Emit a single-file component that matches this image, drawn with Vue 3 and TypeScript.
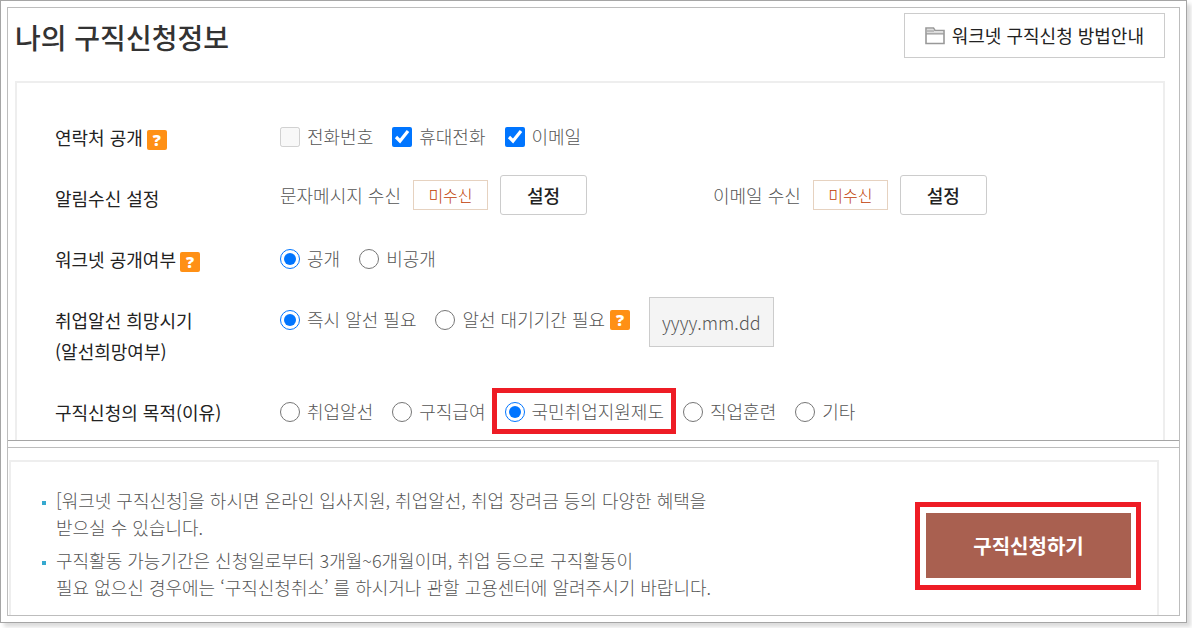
<script setup lang="ts">
import { ref } from 'vue'

const contacts = ref([
  { id: 'phone', label: '전화번호', checked: false, disabled: true },
  { id: 'mobile', label: '휴대전화', checked: true, disabled: false },
  { id: 'email', label: '이메일', checked: true, disabled: false },
])
const alerts = [
  { id: 'sms', label: '문자메시지 수신', state: '미수신' },
  { id: 'mail', label: '이메일 수신', state: '미수신' },
]
const visibility = ref('공개')
const visibilityOptions = ['공개', '비공개']
const timing = ref('즉시 알선 필요')
const timingOptions = ['즉시 알선 필요', '알선 대기기간 필요']
const purpose = ref('국민취업지원제도')
const purposeOptions = ['취업알선', '구직급여', '국민취업지원제도', '직업훈련', '기타']
const notes = [
  ['[워크넷 구직신청]을 하시면 온라인 입사지원, 취업알선, 취업 장려금 등의 다양한 혜택을', '받으실 수 있습니다.'],
  ['구직활동 가능기간은 신청일로부터 3개월~6개월이며, 취업 등으로 구직활동이', '필요 없으신 경우에는 ‘구직신청취소’ 를 하시거나 관할 고용센터에 알려주시기 바랍니다.'],
]
</script>

<template>
  <main class="sheet" lang="ko">
    <div class="frame">
      <section class="info">
        <header class="head">
          <h1>나의 구직신청정보</h1>
          <button type="button" class="guide">
            <svg width="20" height="18" viewBox="0 0 20 18" aria-hidden="true">
              <path d="M1 16.500V1h7.500l1.500 2.500H19v13z" fill="#fff" stroke="#999" stroke-width="1.6" />
              <path d="M2 2h6l1.500 2.500H18V7H2z" fill="#ddd" />
              <path d="M1 6.800h18M2 4h7" stroke="#999" stroke-width="1.2" />
            </svg>
            <span>워크넷 구직신청 방법안내</span>
          </button>
        </header>

        <form class="panel" @submit.prevent>
          <div class="row" role="group" aria-labelledby="t-contact">
            <div class="term"><span id="t-contact">연락처 공개</span><button type="button" class="help">?</button></div>
            <div class="controls">
              <label v-for="c in contacts" :key="c.id" class="option">
                <input v-model="c.checked" type="checkbox" :disabled="c.disabled" /><span>{{ c.label }}</span>
              </label>
            </div>
          </div>

          <div class="row" role="group" aria-labelledby="t-alert">
            <div class="term"><span id="t-alert">알림수신 설정</span></div>
            <div class="controls alerts">
              <div v-for="a in alerts" :key="a.id" class="alert">
                <span>{{ a.label }}</span><span class="state">{{ a.state }}</span>
                <button type="button" class="set">설정</button>
              </div>
            </div>
          </div>

          <div class="row" role="radiogroup" aria-labelledby="t-open">
            <div class="term"><span id="t-open">워크넷 공개여부</span><button type="button" class="help">?</button></div>
            <div class="controls">
              <label v-for="o in visibilityOptions" :key="o" class="option">
                <input v-model="visibility" type="radio" name="visibility" :value="o" /><span>{{ o }}</span>
              </label>
            </div>
          </div>

          <div class="row" role="radiogroup" aria-labelledby="t-time">
            <div class="term"><span id="t-time">취업알선 희망시기<br />(알선희망여부)</span></div>
            <div class="controls">
              <label v-for="o in timingOptions" :key="o" class="option">
                <input v-model="timing" type="radio" name="timing" :value="o" /><span>{{ o }}</span>
              </label>
              <button type="button" class="help after">?</button>
              <input class="date" type="text" placeholder="yyyy.mm.dd" aria-labelledby="t-time" />
            </div>
          </div>

          <div class="row" role="radiogroup" aria-labelledby="t-goal">
            <div class="term"><span id="t-goal">구직신청의 목적(이유)</span></div>
            <div class="controls">
              <label v-for="o in purposeOptions" :key="o" class="option" :class="{ marked: o === '국민취업지원제도' }">
                <input v-model="purpose" type="radio" name="purpose" :value="o" /><span>{{ o }}</span>
              </label>
            </div>
          </div>
        </form>
      </section>

      <section class="apply">
        <div class="panel notice">
          <ul>
            <li v-for="(n, i) in notes" :key="i">{{ n[0] }}<br />{{ n[1] }}</li>
          </ul>
          <div class="callout"><button type="button" class="submit">구직신청하기</button></div>
        </div>
      </section>
    </div>
  </main>
</template>

<style>
body {
  background: #fff;
}
</style>

<style scoped>
* {
  box-sizing: border-box;
}
.sheet {
  margin: 0 5px 5px 0;
  padding: 6px;
  border: 1px solid #a5a5a5;
  background: #fff;
  box-shadow: 4px 4px 4px #dcdcdc;
  color: #555;
  font: 300 18px/27px "Noto Sans CJK KR", sans-serif;
}
button,
input {
  margin: 0;
  font: inherit;
}
button {
  padding: 0;
  cursor: pointer;
}
.frame {
  border: 1px solid #bdbdbd;
}
.head {
  display: flex;
  justify-content: space-between;
  align-items: flex-start;
  padding: 5px 14px 19px 7px;
}
h1 {
  margin: 0;
  color: #333;
  font-size: 28px;
  font-weight: 500;
  line-height: 49px;
}
.guide {
  display: flex;
  align-items: center;
  gap: 7px;
  height: 45px;
  padding: 0 20px;
  border: 1px solid #ccc;
  background: #fff;
  color: #222;
  font-weight: 400;
}
.panel {
  margin: 0 14px 0 7px;
  padding: 24px 38px 0;
  border: 2px solid #eee;
  border-bottom: 0;
}
.row {
  display: grid;
  grid-template-columns: 225px 1fr;
  align-items: start;
}
.term {
  display: flex;
  align-items: center;
  gap: 4px;
  padding: 15px 0;
  color: #222;
  font-weight: 400;
  line-height: 31px;
}
.row:last-child .term {
  padding-bottom: 12px;
}
.help {
  width: 20px;
  height: 20px;
  border: 0;
  border-radius: 2px;
  background: #ff9015;
  color: #fff;
  font: 800 16px/20px "Open Sans", sans-serif;
}
.term .help {
  margin-top: 4px;
}
.controls {
  display: flex;
  align-items: center;
  gap: 19px;
  height: 58px;
  white-space: nowrap;
}
.option {
  position: relative;
  display: flex;
  align-items: center;
  gap: 7px;
}
.option input {
  width: 20px;
  height: 20px;
  margin-top: 2px;
}
.marked::after {
  content: "";
  position: absolute;
  inset: -10px -12px -9px -13px;
  border: 5px solid #ee1c25;
  pointer-events: none;
}
.after {
  margin: 2px 0 0 -14px;
}
.date {
  width: 125px;
  height: 50px;
  margin-top: 6px;
  padding: 0 12px;
  border: 1px solid #ccc;
  background: #f4f4f4;
}
.date::placeholder {
  color: #555;
  opacity: 1;
}
.alerts {
  gap: 0;
  height: 54px;
}
.alert {
  display: flex;
  align-items: center;
  gap: 12px;
}
.alert:first-child {
  width: 433px;
}
.state {
  width: 75px;
  border: 1px solid #e6d2c0;
  color: #c03c00;
  font-size: 16px;
  line-height: 28px;
  text-align: center;
}
.set {
  width: 87px;
  height: 40px;
  border: 1px solid #ccc;
  border-radius: 3px;
  background: #fff;
  color: #222;
  font-weight: 500;
}
.apply {
  padding-top: 6px;
  border-top: 1px solid #a5a5a5;
}
.apply::before {
  content: "";
  display: block;
  height: 12px;
  border-top: 1px solid #bdbdbd;
}
.notice {
  display: flex;
  justify-content: space-between;
  align-items: flex-start;
  margin: 0 20px 0 1px;
  padding: 25px 16px 14px 31px;
}
ul {
  display: grid;
  gap: 6px;
  margin: 0;
  padding: 0;
  list-style: none;
}
li {
  position: relative;
  padding-left: 14px;
}
li::before {
  content: "";
  position: absolute;
  left: 0;
  top: 14px;
  width: 4px;
  height: 4px;
  background: #36a9cf;
}
.callout {
  margin-top: 15px;
  padding: 6px 5px 7px 6px;
  border: 5px solid #ee1c25;
}
.submit {
  display: block;
  width: 205px;
  height: 65px;
  border: 0;
  background: #a96050;
  color: #fff;
  font-size: 20px;
  font-weight: 700;
}
</style>
